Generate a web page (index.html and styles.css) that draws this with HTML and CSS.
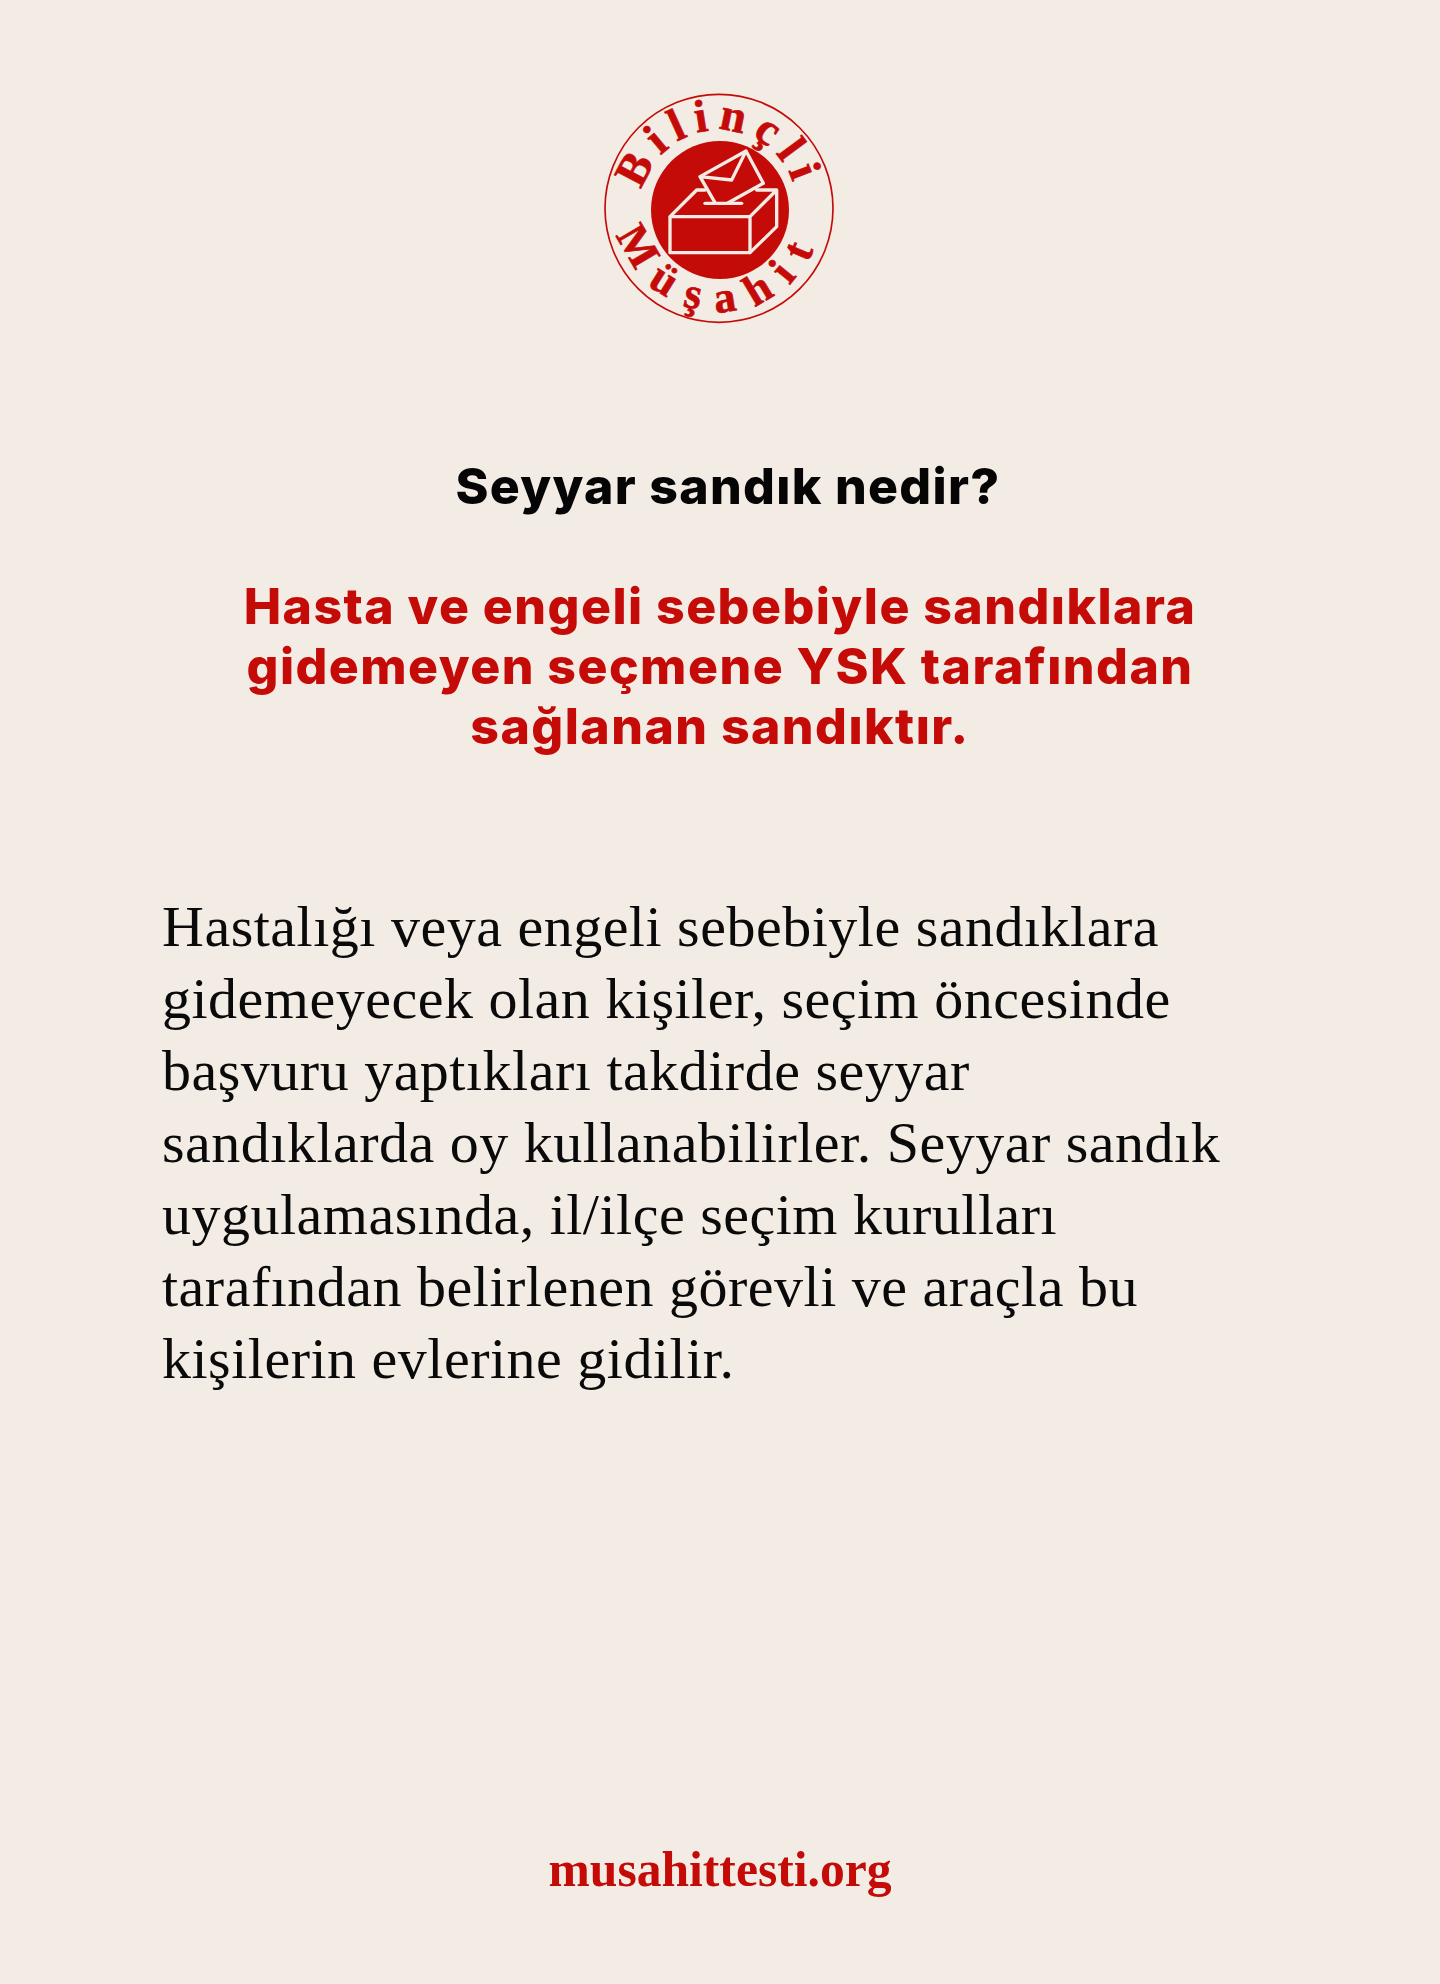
FILE: index.html
```html
<!DOCTYPE html>
<html lang="tr">
<head>
<meta charset="utf-8">
<title>Seyyar sandık nedir?</title>
<link rel="stylesheet" href="styles.css">
</head>
<body>
<main class="page">
  <svg class="logo" viewBox="0 0 780 750" aria-label="Bilinçli Müşahit">
    <defs>
      <path id="arc-top" d="M 152 385 A 235 235 0 0 1 622 385"/>
      <path id="arc-bottom" d="M 77 385 A 310 310 0 0 0 697 385"/>
    </defs>
    <circle class="logo-ring" cx="387" cy="385" r="342"/>
    <circle class="logo-disc" cx="390" cy="390" r="207"/>
    <text class="logo-text logo-text-top"><textPath href="#arc-top" startOffset="50%">Bilinçli</textPath></text>
    <text class="logo-text logo-text-bottom"><textPath href="#arc-bottom" startOffset="50%">Müşahit</textPath></text>
    <path class="logo-line" d="M375 368 L330 290 L468 213 L520 310 L415 368 M330 290 L425 300 L468 213"/>
    <path class="logo-line" d="M345 370 H455"/>
    <path class="logo-line" d="M240 410 H480 V518 H240 Z M240 410 L320 330 H345 M500 330 H560 L480 410 M560 330 V440 L480 518"/>
  </svg>
  <h1 class="question">Seyyar sandık nedir?</h1>
  <h2 class="answer">Hasta ve engeli sebebiyle sandıklara<br>gidemeyen seçmene YSK tarafından<br>sağlanan sandıktır.</h2>
  <p class="body">Hastalığı veya engeli sebebiyle sandıklara<br>gidemeyecek olan kişiler, seçim öncesinde<br>başvuru yaptıkları takdirde seyyar<br>sandıklarda oy kullanabilirler. Seyyar sandık<br>uygulamasında, il/ilçe seçim kurulları<br>tarafından belirlenen görevli ve araçla bu<br>kişilerin evlerine gidilir.</p>
  <p class="site">musahittesti.org</p>
</main>
</body>
</html>
```
FILE: styles.css
```css
* { box-sizing: border-box; }
html, body { margin: 0; padding: 0; background: #f3ece5; }
.page {
  width: 1440px;
  height: 1984px;
  display: flex;
  flex-direction: column;
  align-items: center;
  padding-top: 80px;
  overflow: hidden;
}
.logo { width: 260px; height: 250px; flex: none; }
.logo-ring { fill: none; stroke: #c50b08; stroke-width: 5; }
.logo-disc { fill: #c50b08; }
.logo-text {
  font-family: "Liberation Serif", serif;
  font-weight: 700;
  fill: #c50b08;
  stroke: #c50b08;
  stroke-width: 2;
  text-anchor: middle;
}
.logo-text-top { font-size: 138px; letter-spacing: 26px; }
.logo-text-bottom { font-size: 132px; letter-spacing: 50px; }
.logo-line {
  fill: none;
  stroke: #f3ece5;
  stroke-width: 10;
  stroke-linejoin: round;
  stroke-linecap: round;
}
.question {
  margin: 126px 0 0 16px;
  font: 800 50px/60px Inter, sans-serif;
  letter-spacing: 1.3px;
  color: #050505;
  text-align: center;
}
.answer {
  margin: 60px 0 0;
  font: 800 50px/60px Inter, sans-serif;
  letter-spacing: 1.45px;
  color: #c50b08;
  text-align: center;
}
.body {
  align-self: flex-start;
  margin: 135px 0 0 162px;
  font: 400 58px/72px "Liberation Serif", serif;
  letter-spacing: 0.5px;
  color: #0a0a0a;
  white-space: nowrap;
}
.site {
  margin: auto 0 84px;
  font: 700 49.6px/60px "Liberation Serif", serif;
  color: #c50b08;
}
```
